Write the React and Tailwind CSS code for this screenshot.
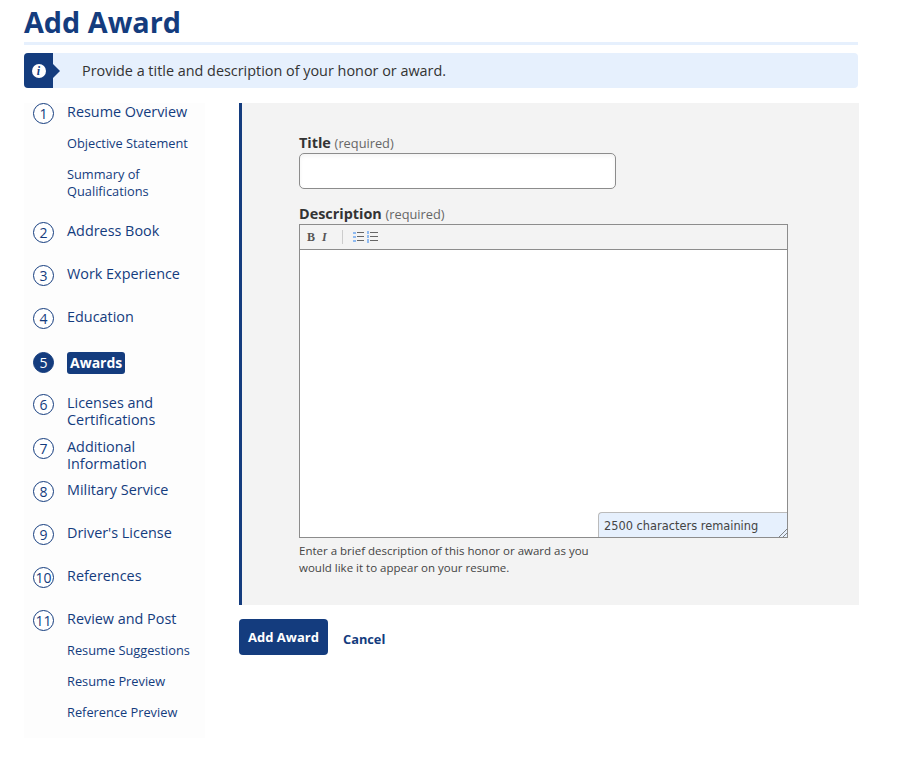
function Num({ n, active }) {
  return (
    <span className={"-mb-[4px] flex h-[21px] w-[21px] shrink-0 items-center justify-center rounded-full border border-[#143c7e] text-[14px] leading-none " + (active ? "bg-[#143c7e] text-white" : "bg-white text-[#143c7e]")}>
      {n}
    </span>
  );
}

function Main({ n, children, className = "" }) {
  return (
    <div className={"flex items-start gap-[13px] pl-[9px] text-[14.4px] leading-[17px] text-[#143c7e] " + className}>
      <Num n={n} />
      <span className="w-[125px]">{children}</span>
    </div>
  );
}

function Sub({ children, className = "" }) {
  return <div className={"pl-[43px] text-[12.8px] leading-[17px] text-[#143c7e] " + className}>{children}</div>;
}

export default function App() {
  return (
    <div className="h-[758px] w-[910px] overflow-hidden bg-white pl-6 font-['Open_Sans',sans-serif] text-[#333]">
      <div className="w-[834px]">
        <h1 className="h-[42px] pt-[3px] text-[28.8px] font-bold leading-[38px] text-[#143c7e]">Add Award</h1>
        <div className="h-[3px] bg-[#e6f0fd]" />
        <div className="mt-2 flex h-[35px] items-center rounded-[4px] bg-[#e6f0fd]">
          <div className="relative flex h-[35px] w-[29px] items-center justify-center rounded-l-[4px] bg-[#143c7e]">
            <span className="flex h-[14px] w-[14px] items-center justify-center rounded-full bg-white font-['Liberation_Serif',serif] text-[12px] font-bold italic leading-none text-[#143c7e]">i</span>
            <span className="absolute left-[29px] top-[11px] h-0 w-0 border-y-[7px] border-l-[7px] border-y-transparent border-l-[#143c7e]" />
          </div>
          <p className="ml-[29px] text-[14.4px] leading-[20px] text-[#333]">Provide a title and description of your honor or award.</p>
        </div>
      </div>

      <div className="mt-[15px] flex items-start">
        <nav className="h-[635px] w-[181px] shrink-0 bg-[#fdfdfd]">
          <Main n={1}>Resume Overview</Main>
          <Sub className="mt-[15px]">Objective Statement</Sub>
          <Sub className="mt-[14px]">Summary of<br />Qualifications</Sub>
          <Main n={2} className="mt-[22px]">Address Book</Main>
          <Main n={3} className="mt-[26px]">Work Experience</Main>
          <Main n={4} className="mt-[26px]">Education</Main>
          <div className="mt-[27px] flex items-start gap-[13px] pl-[9px]">
            <Num n={5} active />
            <span className="rounded-[3px] bg-[#143c7e] px-[3px] text-[14px] font-bold leading-[22px] text-white">Awards</span>
          </div>
          <Main n={6} className="mt-[20px]">Licenses and Certifications</Main>
          <Main n={7} className="mt-[10px]">Additional Information</Main>
          <Main n={8} className="mt-[9px]">Military Service</Main>
          <Main n={9} className="mt-[26px]">Driver's License</Main>
          <Main n={10} className="mt-[26px]">References</Main>
          <Main n={11} className="mt-[26px]">Review and Post</Main>
          <Sub className="mt-[15px]">Resume Suggestions</Sub>
          <Sub className="mt-[14px]">Resume Preview</Sub>
          <Sub className="mt-[14px]">Reference Preview</Sub>
        </nav>

        <div className="ml-[34px] w-[620px]">
          <div className="h-[502px] border-l-[3px] border-[#143c7e] bg-[#f3f3f3] pl-[57px] pt-[31px]">
            <label className="block text-[14.4px] font-bold leading-[18px] text-[#333]">
              Title <span className="text-[12.8px] font-normal text-[#666]">(required)</span>
            </label>
            <input className="mt-[1px] block h-[36px] w-[317px] rounded-[5px] border border-[#8c8c8c] bg-white shadow-inner" />
            <label className="mt-[15px] block text-[14.4px] font-bold leading-[19px] text-[#333]">
              Description <span className="text-[12.8px] font-normal text-[#666]">(required)</span>
            </label>
            <div className="relative h-[314px] w-[489px] border border-[#8c8c8c] bg-white">
              <div className="flex h-[25px] items-center border-b border-[#8c8c8c] bg-[#f3f3f3] pl-[7px]">
                <span className="w-[15px] font-['Liberation_Serif',serif] text-[12px] font-bold leading-none text-[#555]">B</span>
                <span className="w-[20px] font-['Liberation_Serif',serif] text-[12px] font-bold italic leading-none text-[#555]">I</span>
                <span className="h-[14px] w-px bg-[#ccc]" />
                <svg className="ml-[9px]" width="26" height="14" viewBox="0 0 26 14">
                  <g fill="#8fbaf0">
                    <rect x="1" y="2" width="3" height="2" />
                    <rect x="1" y="6" width="3" height="2" />
                    <rect x="1" y="10" width="3" height="2" />
                    <rect x="15" y="1" width="2" height="3" />
                    <rect x="15" y="5" width="2" height="3" />
                    <rect x="15" y="9" width="2" height="4" />
                  </g>
                  <g fill="#666">
                    <rect x="5" y="2" width="7" height="1" />
                    <rect x="5" y="6" width="7" height="1" />
                    <rect x="5" y="10" width="7" height="1" />
                    <rect x="18" y="2" width="8" height="1" />
                    <rect x="18" y="6" width="8" height="1" />
                    <rect x="18" y="10" width="8" height="1" />
                  </g>
                </svg>
              </div>
              <div className="absolute bottom-0 right-0 flex h-[25px] w-[189px] items-center rounded-tl-[4px] border-l border-t border-[#bbbbbb] bg-[#e6f0fd] pl-[5px] pt-[4px] font-['DejaVu_Sans',sans-serif] text-[11.4px] leading-none text-[#444]">
                2500 characters remaining
              </div>
              <svg className="absolute bottom-0 right-0" width="9" height="9" viewBox="0 0 9 9">
                <path d="M1 9 L9 1 M5 9 L9 5" stroke="#666" strokeWidth="0.8" fill="none" />
              </svg>
            </div>
            <p className="mt-[4px] w-[310px] text-[11.5px] leading-[17px] text-[#444]">
              Enter a brief description of this honor or award as you would like it to appear on your resume.
            </p>
          </div>
          <div className="mt-[14px] flex items-center">
            <button className="h-[36px] w-[89px] rounded-[4px] bg-[#143c7e] pt-[1px] text-[13px] font-bold text-white">Add Award</button>
            <a className="ml-[15px] mt-[5px] text-[12.8px] font-bold text-[#143c7e]">Cancel</a>
          </div>
        </div>
      </div>
    </div>
  );
}
